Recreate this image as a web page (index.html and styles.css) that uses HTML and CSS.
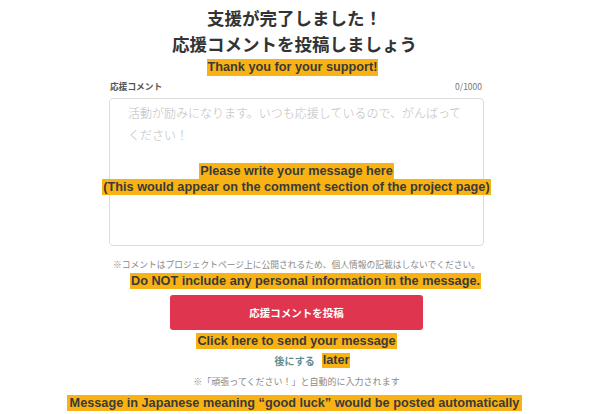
FILE: index.html
```html
<!DOCTYPE html>
<html lang="ja">
<head>
<meta charset="utf-8">
<title>支援が完了しました</title>
<link rel="stylesheet" href="styles.css">
</head>
<body>
<main class="page">
  <h1 class="title">支援が完了しました！<br>応援コメントを投稿しましょう</h1>
  <span class="hl hl-thanks">Thank you for your support!</span>

  <div class="label-row">
    <span class="label">応援コメント</span>
    <span class="count">0/1000</span>
  </div>
  <div class="textbox">
    <p class="placeholder">活動が励みになります。いつも応援しているので、がんばってください！</p>
    <div class="box-notes">
      <span class="hl">Please write your message here</span>
      <span class="hl">(This would appear on the comment section of the project page)</span>
    </div>
  </div>

  <p class="note">※コメントはプロジェクトページ上に公開されるため、個人情報の記載はしないでください。</p>
  <span class="hl hl-donot">Do NOT include any personal information in the message.</span>

  <button class="submit" type="button">応援コメントを投稿</button>
  <span class="hl hl-click">Click here to send your message</span>

  <div class="later-row">
    <a class="later" href="#">後にする</a>
    <span class="hl">later</span>
  </div>

  <p class="note note-auto">※「頑張ってください！」と自動的に入力されます</p>
  <span class="hl hl-auto">Message in Japanese meaning “good luck” would be posted automatically</span>
</main>
</body>
</html>
```

FILE: styles.css
```css
* { box-sizing: border-box; }

html, body {
  margin: 0;
  padding: 0;
  background: #ffffff;
}

body {
  font-family: "Noto Sans CJK JP", "Noto Sans", sans-serif;
  color: #333333;
}

.page {
  width: 375px;
  margin-left: 109px;
  display: flex;
  flex-direction: column;
  align-items: center;
  padding-top: 5px;
}

.title {
  margin: 0 4px 0 0;
  font-size: 17.5px;
  line-height: 26px;
  font-weight: 700;
  color: #333333;
  text-align: center;
  white-space: nowrap;
}

.hl {
  display: inline-block;
  background: #f9b214;
  color: #3a3a3a;
  font-family: "Liberation Sans", Arial, sans-serif;
  font-weight: 700;
  font-size: 12.7px;
  line-height: 16px;
  padding: 0 1px;
  white-space: nowrap;
}

.hl-thanks {
  margin-top: 2px;
  margin-right: 8px;
  line-height: 17px;
}

.label-row {
  align-self: stretch;
  display: flex;
  justify-content: space-between;
  align-items: center;
  margin-top: 3px;
  height: 14px;
  padding: 0 2px 0 1px;
}

.label {
  font-size: 8.7px;
  font-weight: 700;
  color: #555555;
}

.count {
  font-size: 8.5px;
  color: #777777;
}

.textbox {
  align-self: stretch;
  margin-top: 5px;
  height: 148px;
  border: 1px solid #dcdcdc;
  border-radius: 4px;
  padding: 3px 18px 0 18px;
  display: flex;
  flex-direction: column;
  align-items: center;
}

.placeholder {
  margin: 0;
  align-self: stretch;
  font-size: 12px;
  line-height: 22px;
  color: #bdbdbd;
  font-weight: 300;
}

.box-notes {
  margin-top: 17px;
  display: flex;
  flex-direction: column;
  align-items: center;
  width: 0;
}

.note {
  margin: 13px 0 0 0;
  font-size: 8.75px;
  line-height: 12px;
  color: #8a8a8a;
  white-space: nowrap;
  text-align: center;
}

.hl-donot {
  margin-top: 2px;
  margin-left: 18px;
}

.submit {
  margin-top: 6px;
  width: 253px;
  height: 35px;
  border: none;
  border-radius: 3px;
  background: #e0354f;
  color: #ffffff;
  font-family: "Noto Sans CJK JP", sans-serif;
  font-size: 10.5px;
  font-weight: 700;
  padding: 0;
}

.hl-click {
  margin-top: 3px;
}

.later-row {
  margin-top: 4px;
  margin-left: 32px;
  display: flex;
  align-items: center;
  gap: 7px;
  height: 15px;
}

.later {
  font-size: 10px;
  font-weight: 700;
  color: #5b8b8e;
  text-decoration: none;
}

.later-row .hl {
  line-height: 15px;
}

.note-auto {
  margin-top: 8px;
  font-size: 9px;
}

.hl-auto {
  margin-top: 7px;
  margin-right: 4px;
  padding: 0 3px;
}
```
